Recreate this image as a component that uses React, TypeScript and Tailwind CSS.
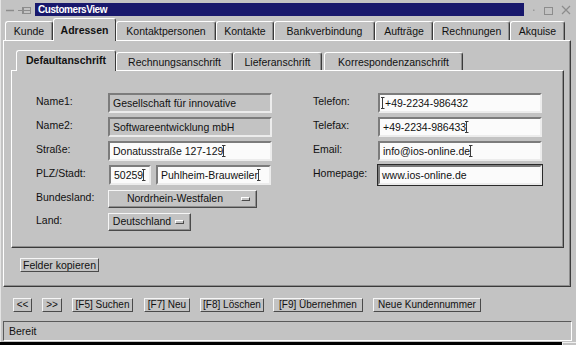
import React from "react";

const raised =
  "border border-t-[#f6f6f6] border-l-[#f6f6f6] border-r-[#4a4a4a] border-b-[#4a4a4a] shadow-[inset_-1px_-1px_0_#8e8e8e]";
const btnRaised =
  "border border-t-[#f6f6f6] border-l-[#f6f6f6] border-r-[#4a4a4a] border-b-[#4a4a4a]";
const sunken =
  "border-2 border-t-[#7c7c7c] border-l-[#7c7c7c] border-r-[#ececec] border-b-[#ececec]";

function Cursor({ className = "" }: { className?: string }) {
  return (
    <svg width="4" height="12" viewBox="0 0 4 12" className={"inline-block shrink-0 " + className}>
      <path d="M0 0.5H3.5M1.5 0.5V11.5M0 11.5H3.5" stroke="#3a3a3a" strokeWidth="1" fill="none" />
    </svg>
  );
}

function Field({
  w,
  children,
  disabled,
  pad = "pl-[3px]",
}: {
  w: string;
  children: React.ReactNode;
  disabled?: boolean;
  pad?: string;
}) {
  return (
    <div
      className={`${w} h-[20px] ${sunken} ${
        disabled ? "bg-[#c3c3c3]" : "bg-[#fbfbfb]"
      } flex items-center ${pad} whitespace-nowrap overflow-hidden leading-none`}
    >
      {children}
    </div>
  );
}

function OTab({ label, w, sel }: { label: string; w: string; sel?: boolean }) {
  if (sel)
    return (
      <div
        className={`${w} h-[23px] -mb-px relative z-10 bg-[#c3c3c3] border-t border-l border-t-white border-l-white border-r border-r-[#3a3a3a] rounded-t-[3px] flex items-center justify-center font-bold pt-[1px] whitespace-nowrap`}
      >
        {label}
      </div>
    );
  return (
    <div
      className={`${w} h-[19px] border-t border-l border-t-white border-l-white border-r border-r-[#3a3a3a] shadow-[inset_-1px_0_0_#8e8e8e] rounded-t-[3px] flex items-center justify-center pt-[2px] whitespace-nowrap`}
    >
      {label}
    </div>
  );
}

function ITab({ label, w, sel, className = "" }: { label: string; w: string; sel?: boolean; className?: string }) {
  if (sel)
    return (
      <div
        className={`${w} h-[21px] -mb-px relative z-10 bg-[#c3c3c3] border-t border-l border-t-white border-l-white border-r border-r-[#3a3a3a] rounded-t-[3px] flex items-center justify-center font-bold whitespace-nowrap ${className}`}
      >
        {label}
      </div>
    );
  return (
    <div
      className={`${w} h-[18px] border-t border-l border-t-white border-l-white border-r border-r-[#3a3a3a] shadow-[inset_-1px_0_0_#8e8e8e] rounded-t-[3px] flex items-center justify-center pt-[2px] whitespace-nowrap ${className}`}
    >
      {label}
    </div>
  );
}

function Drop({ w, label }: { w: string; label: string }) {
  return (
    <div className={`${w} h-[18px] ${raised} flex items-center`}>
      <span className="flex-1 text-center leading-none whitespace-nowrap">{label}</span>
      <span className="w-[9px] h-[4px] border border-t-white border-l-white border-r-[#4a4a4a] border-b-[#4a4a4a] mr-[6px]" />
    </div>
  );
}

function Btn({ w, children, className = "" }: { w: string; children: React.ReactNode; className?: string }) {
  return (
    <div
      className={`${w} h-[14px] ${btnRaised} flex items-center justify-center text-[10px] leading-none whitespace-nowrap ${className}`}
    >
      {children}
    </div>
  );
}

function Row({
  label,
  field,
  rlabel,
  rfield,
}: {
  label: string;
  field: React.ReactNode;
  rlabel?: string;
  rfield?: React.ReactNode;
}) {
  return (
    <div className="flex items-center h-[20px]">
      <div className="w-[72px] pb-[2px] whitespace-nowrap">{label}</div>
      <div className="w-[164px] flex items-center">{field}</div>
      <div className="w-[41px]" />
      <div className="w-[65px] pb-[2px] whitespace-nowrap">{rlabel}</div>
      {rfield}
    </div>
  );
}

export default function App() {
  return (
    <div className="w-[576px] h-[345px] bg-[#c3c3c3] flex flex-col font-['Liberation_Sans',Arial,sans-serif] text-[10.5px] text-[#111] overflow-hidden shadow-[inset_1px_0_0_#e4e4e4]">
      {/* Title bar */}
      <div className="h-[18px] flex items-start shrink-0">
        <svg width="35" height="18" viewBox="0 0 35 18" className="shrink-0">
          <path d="M6 10.5H14" stroke="#8c8c8c" strokeWidth="1.5" />
          <path d="M18 10.5H22.5M22.5 7V14" stroke="#8c8c8c" strokeWidth="1" fill="none" />
          <rect x="23.5" y="7.5" width="7" height="6" stroke="#8c8c8c" strokeWidth="1" fill="none" />
          <path d="M23.5 10.5H30.5" stroke="#8c8c8c" strokeWidth="1" />
        </svg>
        <div className="mt-[3px] h-[13px] w-[489px] bg-[#18186c] text-white font-bold text-[10px] leading-[13px] pl-[3px] tracking-[-0.45px]">
          CustomersView
        </div>
        <svg width="52" height="18" viewBox="0 0 52 18" className="shrink-0">
          <rect x="9" y="9.5" width="1.5" height="1.5" fill="#9a9a9a" />
          <rect x="20.5" y="7.5" width="8" height="7" stroke="#8c8c8c" strokeWidth="1" fill="none" />
          <path d="M38 6L46 14M46 6L38 14" stroke="#8c8c8c" strokeWidth="1.2" />
        </svg>
      </div>

      {/* Outer tabs */}
      <div className="h-[22px] flex items-end pl-[5px] relative z-10 shrink-0">
        <OTab label="Kunde" w="w-[48px]" />
        <OTab label="Adressen" w="w-[63px]" sel />
        <OTab label="Kontaktpersonen" w="w-[100px]" />
        <OTab label="Kontakte" w="w-[58px]" />
        <OTab label="Bankverbindung" w="w-[101px]" />
        <OTab label="Aufträge" w="w-[58px]" />
        <OTab label="Rechnungen" w="w-[77px]" />
        <OTab label="Akquise" w="w-[55px]" />
      </div>

      {/* Outer panel */}
      <div className="ml-[3px] w-[568px] h-[247px] shrink-0 border border-t-white border-l-white border-r-[#3a3a3a] border-b-[#3a3a3a] shadow-[inset_-1px_-1px_0_#8e8e8e] flex flex-col pl-[7px] pt-[9px]">
        {/* Inner tabs */}
        <div className="h-[20px] flex items-end pl-[5px] relative z-10 shrink-0">
          <ITab label="Defaultanschrift" w="w-[100px]" sel />
          <ITab label="Rechnungsanschrift" w="w-[117px]" />
          <ITab label="Lieferanschrift" w="w-[89px]" />
          <ITab label="Korrespondenzanschrift" w="w-[139px]" className="ml-[2px]" />
        </div>

        {/* Inner panel */}
        <div className="w-[553px] h-[178px] shrink-0 border border-t-white border-l-white border-r-[#3a3a3a] border-b-[#3a3a3a] shadow-[inset_-1px_-1px_0_#8e8e8e] pt-[22px] pl-[24px] flex flex-col gap-[4px]">
          <Row
            label="Name1:"
            field={
              <Field w="w-[164px]" disabled>
                Gesellschaft für innovative
              </Field>
            }
            rlabel="Telefon:"
            rfield={
              <Field w="w-[164px]" pad="pl-[1px]">
                <Cursor />
                +49-2234-986432
              </Field>
            }
          />
          <Row
            label="Name2:"
            field={
              <Field w="w-[164px]" disabled>
                Softwareentwicklung mbH
              </Field>
            }
            rlabel="Telefax:"
            rfield={
              <Field w="w-[164px]">
                +49-2234-986433
                <Cursor className="-ml-[1px]" />
              </Field>
            }
          />
          <Row
            label="Straße:"
            field={
              <Field w="w-[164px]">
                Donatusstraße 127-129
                <Cursor className="-ml-[1px]" />
              </Field>
            }
            rlabel="Email:"
            rfield={
              <Field w="w-[164px]">
                info@ios-online.de
                <Cursor className="-ml-[1px]" />
              </Field>
            }
          />
          <Row
            label="PLZ/Stadt:"
            field={
              <>
                <div className="ml-[1px]">
                  <Field w="w-[42px]">
                    50259
                    <Cursor className="-ml-[1px]" />
                  </Field>
                </div>
                <div className="ml-[5px]">
                  <Field w="w-[115px]">
                    Puhlheim-Brauweiler
                    <Cursor className="-ml-[1px]" />
                  </Field>
                </div>
              </>
            }
            rlabel="Homepage:"
            rfield={
              <div className="w-[166px] h-[22px] border border-[#2a2a2a] -ml-px">
                <Field w="w-[164px]" pad="pl-[2px]">
                  www.ios-online.de
                </Field>
              </div>
            }
          />
          <div className="flex items-center h-[19px]">
            <div className="w-[72px] pb-[2px]">Bundesland:</div>
            <Drop w="w-[149px]" label="Nordrhein-Westfalen" />
          </div>
          <div className="flex items-center h-[19px]">
            <div className="w-[72px] pb-[2px]">Land:</div>
            <Drop w="w-[83px]" label="Deutschland" />
          </div>
        </div>

        <div className="mt-[10px] ml-[9px] flex">
          <div
            className={`w-[79px] h-[14px] ${btnRaised} flex items-center justify-center leading-none whitespace-nowrap`}
          >
            Felder kopieren
          </div>
        </div>
      </div>

      {/* Bottom buttons */}
      <div className="mt-[11px] ml-[13px] h-[14px] flex items-center shrink-0">
        <Btn w="w-[19px]">&lt;&lt;</Btn>
        <Btn w="w-[20px]" className="ml-[10px]">
          &gt;&gt;
        </Btn>
        <Btn w="w-[61px]" className="ml-[10px]">
          [F5] Suchen
        </Btn>
        <Btn w="w-[46px]" className="ml-[11px]">
          [F7] Neu
        </Btn>
        <Btn w="w-[64px]" className="ml-[10px]">
          [F8] Löschen
        </Btn>
        <Btn w="w-[90px]" className="ml-[9px]">
          [F9] Übernehmen
        </Btn>
        <Btn w="w-[108px]" className="ml-[10px]">
          Neue Kundennummer
        </Btn>
      </div>

      {/* Status bar */}
      <div className="ml-[3px] w-[569px] h-[20px] mt-[9px] shrink-0 border border-t-[#5a5a5a] border-l-[#5a5a5a] border-b-white border-r-white flex items-center pl-[5px] leading-none">
        Bereit
      </div>
      <div className="mt-[1px] h-[3px] flex shrink-0">
        <div className="w-[562px] bg-black" />
        <div className="flex-1 border-t border-l border-[#f0f0f0]" />
      </div>
    </div>
  );
}
